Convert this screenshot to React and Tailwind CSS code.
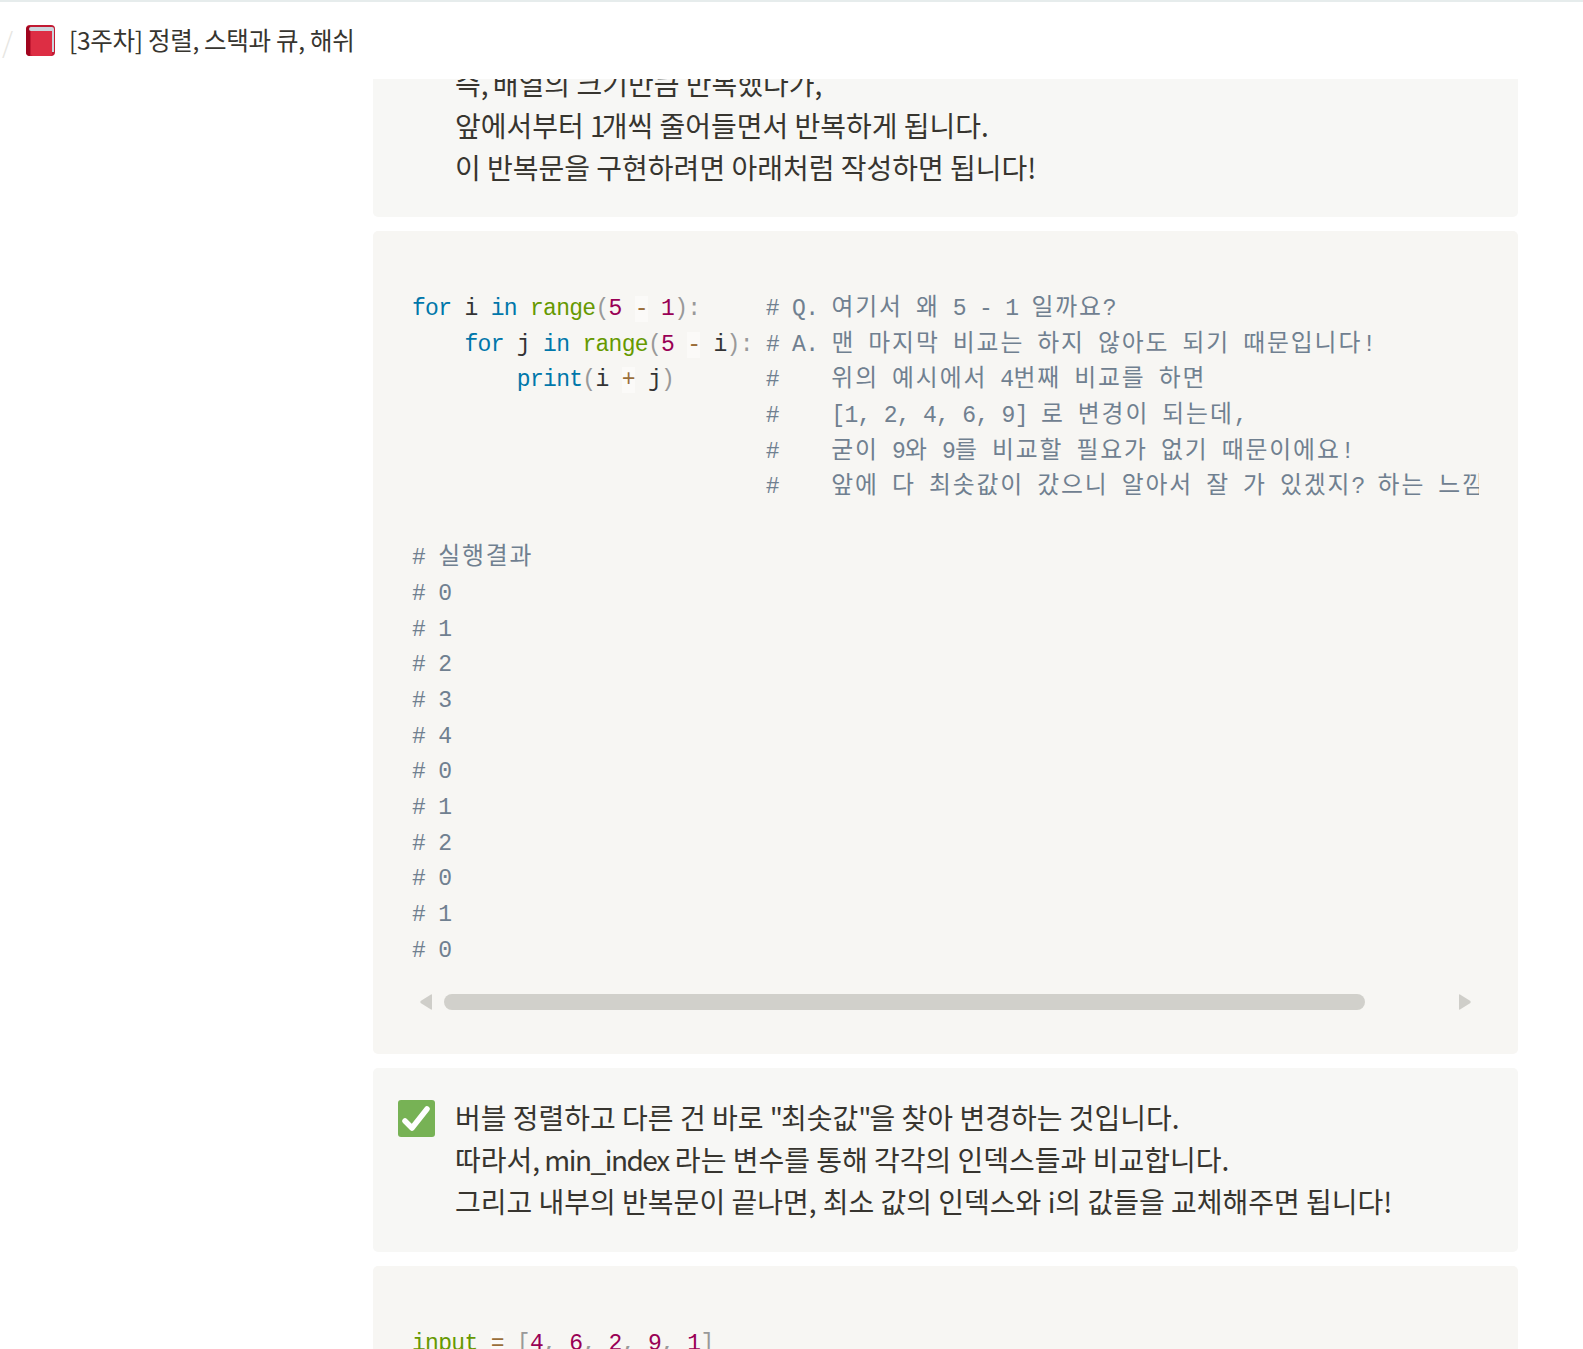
const K = ({ c, children }) => <span className={c}>{children}</span>;
const kw = "text-[#0077aa]";
const fn = "text-[#669900]";
const num = "text-[#990055]";
const op = "text-[#9a6e3a] bg-[#fbfaf8]";
const pu = "text-[#999999]";
const cm = "text-[#708090]";

function Book() {
  return (
    <svg width="30" height="31" viewBox="0 0 30 31" className="shrink-0">
      <rect x="0" y="0" width="29" height="31" rx="4" fill="#c21a33" />
      <path d="M0 5 Q0 1 4 1 V31 Q0 31 0 27Z" fill="#a0041e" />
      <path d="M3 4 Q3 2 5 2 H26 Q28 2 28 4 V27 H26 V6 H5 Q3 6 3 4Z" fill="#ccd6dd" />
      <path d="M5 6 H26 V29 Q26 31 24 31 H7 Q5 31 5 29Z" fill="#dd2e44" />
    </svg>
  );
}

function Check() {
  return (
    <svg width="37" height="37" viewBox="0 0 37 37" className="shrink-0">
      <rect x="0" y="0" width="37" height="37" rx="3" fill="#77b255" />
      <path d="M7 21 L14 28 L29 9" fill="none" stroke="#fff" strokeWidth="5.5" strokeLinecap="round" strokeLinejoin="round" />
    </svg>
  );
}

function Arrow({ dir }) {
  return (
    <svg width="12" height="16" viewBox="0 0 12 16" className="shrink-0">
      {dir === "left" ? (
        <path d="M12 1 Q12 0 11 0.4 L0.6 7 Q0 8 0.6 9 L11 15.6 Q12 16 12 15Z" fill="#cfcec9" />
      ) : (
        <path d="M0 1 Q0 0 1 0.4 L11.4 7 Q12 8 11.4 9 L1 15.6 Q0 16 0 15Z" fill="#cfcec9" />
      )}
    </svg>
  );
}

const comments = [
  "# Q. 여기서 왜 5 - 1 일까요?",
  "# A. 맨 마지막 비교는 하지 않아도 되기 때문입니다!",
  "#    위의 예시에서 4번째 비교를 하면",
  "#    [1, 2, 4, 6, 9] 로 변경이 되는데,",
  "#    굳이 9와 9를 비교할 필요가 없기 때문이에요!",
  "#    앞에 다 최솟값이 갔으니 알아서 잘 가 있겠지? 하는 느낌입니다!",
];

const results = ["# 실행결과", "# 0", "# 1", "# 2", "# 3", "# 4", "# 0", "# 1", "# 2", "# 0", "# 1", "# 0"];

function Comment({ text }) {
  const parts = text.split(/([\uac00-\ud7a3]+)/);
  return (
    <span className={cm}>
      {parts.map((p, i) =>
        /[\uac00-\ud7a3]/.test(p) ? (
          <span key={i} className="text-[23.8px] leading-[0] tracking-[1.9px]">{p}</span>
        ) : (
          <span key={i}>{p}</span>
        )
      )}
    </span>
  );
}

const codeLeft = [
  <>
    <K c={kw}>for</K> i <K c={kw}>in</K> <K c={fn}>range</K><K c={pu}>(</K><K c={num}>5</K> <K c={op}>-</K> <K c={num}>1</K><K c={pu}>)</K><K c={pu}>:</K>{"     "}
  </>,
  <>
    {"    "}<K c={kw}>for</K> j <K c={kw}>in</K> <K c={fn}>range</K><K c={pu}>(</K><K c={num}>5</K> <K c={op}>-</K> i<K c={pu}>)</K><K c={pu}>:</K>{" "}
  </>,
  <>
    {"        "}<K c={kw}>print</K><K c={pu}>(</K>i <K c={op}>+</K> j<K c={pu}>)</K>{"       "}
  </>,
  <>{"                           "}</>,
  <>{"                           "}</>,
  <>{"                           "}</>,
];

const monoFont = "font-['Liberation_Mono','Noto_Sans_CJK_KR',monospace]";

function CodeLine({ children }) {
  return <div className="h-[35.65px] leading-[35.65px] whitespace-pre tracking-[-0.7px]">{children}</div>;
}

function Para({ children }) {
  return <div className="h-[42px] leading-[42px] whitespace-pre">{children}</div>;
}

const tight = "tracking-[-2px]";

export default function App() {
  return (
    <div className="h-[1349px] w-[1583px] overflow-hidden bg-white flex flex-col font-['Noto_Sans_CJK_KR','Noto_Sans',sans-serif] text-[#37352f]">
      <header className="h-[79px] shrink-0 border-t-2 border-[#e6ecec] flex items-center bg-white">
        <span className="w-[26px] pl-[2px] text-[28px] text-[#e6e5e1] font-light">/</span>
        <Book />
        <span className="ml-[13px] text-[24.5px] tracking-[-0.3px] text-[#37352f]">[3주차] 정렬, 스택과 큐, 해쉬</span>
      </header>
      <main className="flex-1 overflow-hidden pl-[373px]">
        <div className="w-[1145px] -mt-[17px] flex flex-col gap-[14px]">
          <section className="rounded-[5px] bg-[#f7f7f5] pl-[82px] pb-[29px] text-[28px]">
            <Para>즉<span className={tight}>,</span> 배열의 크기만큼 반복했다가,</Para>
            <Para>앞에서부터 <span className="tracking-[-4px]">1</span>개씩 줄어들면서 반복하게 됩니다.</Para>
            <Para>이 반복문을 구현하려면 아래처럼 작성하면 됩니다!</Para>
          </section>

          <section className={`rounded-[5px] bg-[#f7f6f3] h-[823px] pl-[39px] pr-[39px] pt-[61px] text-[23px] text-[#333333] ${monoFont}`}>
            <div className="overflow-hidden">
              {codeLeft.map((line, i) => (
                <CodeLine key={i}>
                  {line}
                  <Comment text={comments[i]} />
                </CodeLine>
              ))}
              <CodeLine> </CodeLine>
              {results.map((r, i) => (
                <CodeLine key={i}>
                  <Comment text={r} />
                </CodeLine>
              ))}
            </div>
            <div className="mt-[25px] flex items-center pl-[8px] pr-[8px]">
              <Arrow dir="left" />
              <div className="ml-[12px] h-[16px] w-[921px] rounded-full bg-[#d1d0cb]" />
              <div className="flex-1" />
              <Arrow dir="right" />
            </div>
          </section>

          <section className="rounded-[5px] bg-[#f7f7f5] flex pl-[25px] pt-[28px] pb-[30px] text-[28px]">
            <div className="w-[57px] shrink-0 pt-[4px]">
              <Check />
            </div>
            <div>
              <Para>버블 정렬하고 다른 건 바로 <span className={tight}>"</span>최솟값<span className={tight}>"</span>을 찾아 변경하는 것입니다.</Para>
              <Para>따라서<span className={tight}>,</span> <span className="tracking-[-1.5px]">min_index</span> 라는 변수를 통해 각각의 인덱스들과 비교합니다.</Para>
              <Para>그리고 내부의 반복문이 끝나면, 최소 값의 인덱스와 i의 값들을 교체해주면 됩니다!</Para>
            </div>
          </section>

          <section className={`rounded-[5px] bg-[#f7f6f3] h-[200px] pl-[39px] pt-[61px] text-[23px] text-[#333333] ${monoFont}`}>
            <CodeLine>
              <K c={fn}>input</K> <K c={op}>=</K> <K c={pu}>[</K><K c={num}>4</K><K c={pu}>,</K> <K c={num}>6</K><K c={pu}>,</K> <K c={num}>2</K><K c={pu}>,</K> <K c={num}>9</K><K c={pu}>,</K> <K c={num}>1</K><K c={pu}>]</K>
            </CodeLine>
          </section>
        </div>
      </main>
    </div>
  );
}
